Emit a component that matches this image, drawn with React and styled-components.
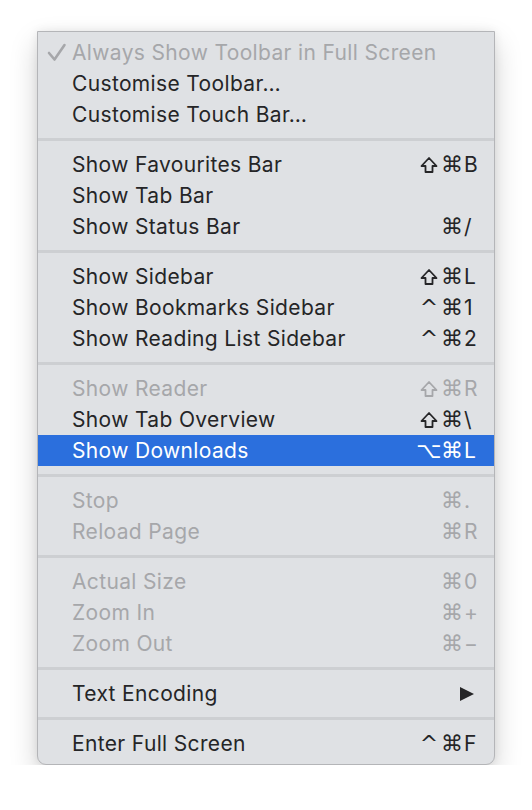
import React from 'react'
import styled, { createGlobalStyle } from 'styled-components'

const GlobalStyle = createGlobalStyle`
  html, body {
    margin: 0;
    padding: 0;
    background: #ffffff;
  }
`

const Pagina = styled.div`
  padding: 31px 0 0 37px;
  font-family: 'Inter', 'Noto Sans', 'DejaVu Sans', sans-serif;
`

const Painel = styled.div`
  width: 456px;
  background-color: #dfe1e4;
  border: 1px solid #b4b5b8;
  border-radius: 0 0 9px 9px;
  padding: 5px 0;
  box-shadow: 0 12px 28px rgba(0, 0, 0, 0.18), 0 0 10px rgba(0, 0, 0, 0.08);
`

const Linha = styled.div`
  position: relative;
  height: 31px;
  display: flex;
  align-items: center;
  padding: 0 16px 0 34px;
  font-size: 21px;
  letter-spacing: 0.35px;
  color: ${p => (p.ativo ? '#ffffff' : p.desativado ? '#a6a7aa' : '#252527')};
  background-color: ${p => (p.ativo ? '#2b6fdd' : 'transparent')};
`

const Rotulo = styled.span`
  flex: 1;
  white-space: nowrap;
`

const Marca = styled.svg`
  position: absolute;
  left: 9px;
  top: 6px;
`

const Separador = styled.div`
  height: 19px;
  display: flex;
  align-items: center;
  &::after {
    content: '';
    display: block;
    width: 100%;
    height: 3px;
    background-color: #cdcfd2;
  }
`

const Atalho = styled.span`
  display: grid;
  grid-template-columns: 22px 24px 16px;
  align-items: center;
  font-size: 21px;
  letter-spacing: 0;
  margin-right: -2px;
`

const Tecla = styled.span`
  display: flex;
  justify-content: ${p => p.centro ? 'center' : 'flex-start'};
  align-items: center;
  font-family: ${p => p.simbolo ? "'DejaVu Sans', sans-serif" : 'inherit'};
  font-size: ${p => p.simbolo ? '22px' : '21px'};
`

const Seta = styled.svg`
  margin-right: 4px;
`

function Shift() {
  return (
    <svg width="18" height="18" viewBox="0 0 18 18">
      <path d="M9 2 L16.5 10 H12.5 V16 H5.5 V10 H1.5 Z" fill="none" stroke="currentColor" strokeWidth="1.8" strokeLinejoin="round" />
    </svg>
  )
}

const grupos = [
  [
    { t: 'Always Show Toolbar in Full Screen', off: true, check: true },
    { t: 'Customise Toolbar…' },
    { t: 'Customise Touch Bar…' },
  ],
  [
    { t: 'Show Favourites Bar', k: ['shift', '⌘', 'B'] },
    { t: 'Show Tab Bar' },
    { t: 'Show Status Bar', k: ['', '⌘', '/'] },
  ],
  [
    { t: 'Show Sidebar', k: ['shift', '⌘', 'L'] },
    { t: 'Show Bookmarks Sidebar', k: ['^', '⌘', '1'] },
    { t: 'Show Reading List Sidebar', k: ['^', '⌘', '2'] },
  ],
  [
    { t: 'Show Reader', off: true, k: ['shift', '⌘', 'R'] },
    { t: 'Show Tab Overview', k: ['shift', '⌘', '\\'] },
    { t: 'Show Downloads', ativo: true, k: ['⌥', '⌘', 'L'] },
  ],
  [
    { t: 'Stop', off: true, k: ['', '⌘', '.'] },
    { t: 'Reload Page', off: true, k: ['', '⌘', 'R'] },
  ],
  [
    { t: 'Actual Size', off: true, k: ['', '⌘', '0'] },
    { t: 'Zoom In', off: true, k: ['', '⌘', '+'] },
    { t: 'Zoom Out', off: true, k: ['', '⌘', '−'] },
  ],
  [{ t: 'Text Encoding', sub: true }],
  [{ t: 'Enter Full Screen', k: ['^', '⌘', 'F'] }],
]

function Item({ item }) {
  return (
    <Linha desativado={item.off} ativo={item.ativo}>
      {item.check && (
        <Marca width="20" height="20" viewBox="0 0 20 20">
          <polyline points="2,10 7.5,16.5 17.5,2" fill="none" stroke="#a6a7aa" strokeWidth="2.6" strokeLinecap="round" strokeLinejoin="round" />
        </Marca>
      )}
      <Rotulo>{item.t}</Rotulo>
      {item.k && (
        <Atalho>
          <Tecla simbolo centro>{item.k[0] === 'shift' ? <Shift /> : item.k[0]}</Tecla>
          <Tecla simbolo centro>{item.k[1]}</Tecla>
          <Tecla>{item.k[2]}</Tecla>
        </Atalho>
      )}
      {item.sub && (
        <Seta width="14" height="14" viewBox="0 0 14 14">
          <polygon points="0,0 14,7 0,14" fill="#252527" />
        </Seta>
      )}
    </Linha>
  )
}

export default function App() {
  return (
    <>
      <GlobalStyle />
      <Pagina>
        <Painel>
          {grupos.map((g, i) => (
            <React.Fragment key={i}>
              {i > 0 && <Separador />}
              {g.map(item => <Item key={item.t} item={item} />)}
            </React.Fragment>
          ))}
        </Painel>
      </Pagina>
    </>
  )
}
